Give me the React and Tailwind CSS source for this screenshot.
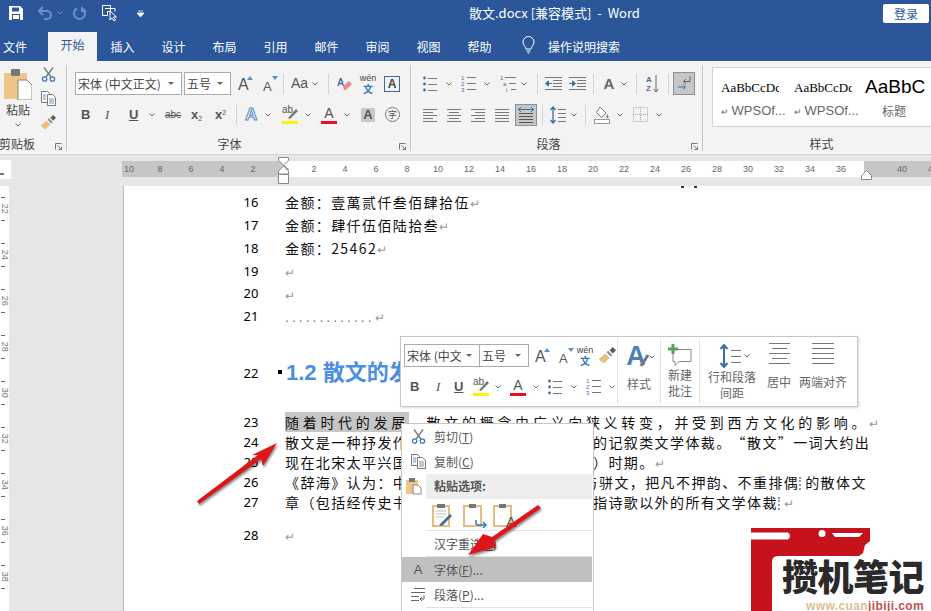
import React from "react";

const Chev = ({ cls = "", c = "#666" }) => (
  <svg width="6" height="4" viewBox="0 0 6 4" className={"shrink-0 " + cls}><path d="M.5.5 3 3 5.5.5" fill="none" stroke={c} /></svg>
);
const Sep = ({ cls = "" }) => <div className={"w-px h-[20px] bg-[#d4d4d4] shrink-0 " + cls} />;

const Launcher = () => (
  <svg width="7" height="7" viewBox="0 0 7 7" className="absolute right-[4px] bottom-[1px]"><path d="M.5 6.5V.5h6M2.5 2.5l4 4M6.5 3.5v3h-3" fill="none" stroke="#777" /></svg>
);

const Scissors = ({ s = 15 }) => (
  <svg width={s} height={s} viewBox="0 0 15 15" className="shrink-0"><path d="M3 .5 10 10M12 .5 5 10" stroke="#777" strokeWidth="1.3" fill="none" /><circle cx="3.6" cy="12" r="2.2" fill="none" stroke="#3f79b5" strokeWidth="1.3" /><circle cx="11.4" cy="12" r="2.2" fill="none" stroke="#3f79b5" strokeWidth="1.3" /></svg>
);
const CopyIco = () => (
  <svg width="15" height="15" viewBox="0 0 15 15" className="shrink-0"><path d="M.5.5h6l2 2v9h-8z" fill="#fff" stroke="#777" /><path d="M6.5 3.5h5l3 3v8h-8z" fill="#fff" stroke="#777" /><path d="M8 8h5M8 10h5M8 12h5M2 4h3M2 6h3M2 8h3" stroke="#6f93b8" /></svg>
);
const Brush = ({ s = 16 }) => (
  <svg width={s} height={s} viewBox="0 0 16 16" className="shrink-0"><path d="M0 11 6 6l4 4-5 5H3l1-2-2 1z" fill="#e6bd7c" /><path d="m7 5 1.500-1.500 4 4L11 9z" fill="#8a8a8a" /><path d="m10 3 3-3 3 3-3 3z" fill="#5b5b5b" /></svg>
);

const Lines = ({ w = 14, rows }) => (
  <svg width={w} height="14" viewBox={`0 0 ${w} 14`} className="shrink-0">
    {rows.map((r, i) => <path key={i} d={`M${r[0]} ${i * (12 / (rows.length - 1)) + 1}.5H${r[1]}`} stroke="#777" />)}
  </svg>
);
const AlignL = () => <Lines rows={[[0, 14], [0, 10], [0, 14], [0, 10], [0, 14]]} />;
const AlignC = () => <Lines rows={[[0, 14], [2, 12], [0, 14], [2, 12], [0, 14]]} />;
const AlignR = () => <Lines rows={[[0, 14], [4, 14], [0, 14], [4, 14], [0, 14]]} />;
const AlignJ = () => <Lines rows={[[0, 14], [0, 14], [0, 14], [0, 14], [0, 14]]} />;

const Bullets = ({ cls = "" }) => (
  <svg width="14" height="16" viewBox="0 0 14 16" className={"shrink-0 " + cls}>
    <circle cx="1.500" cy="2" r="1.400" fill="#3a6ea5" /><circle cx="1.500" cy="8" r="1.400" fill="#3a6ea5" /><circle cx="1.500" cy="14" r="1.400" fill="#3a6ea5" />
    <path d="M5 2.500h9M5 8.500h9M5 14.500h9" stroke="#777" />
  </svg>
);
const Numbers = ({ cls = "" }) => (
  <svg width="15" height="17" viewBox="0 0 15 17" className={"shrink-0 " + cls}>
    <text x="0" y="5" fontSize="6" fill="#3a6ea5" fontFamily="Liberation Sans">1</text>
    <text x="0" y="11" fontSize="6" fill="#3a6ea5" fontFamily="Liberation Sans">2</text>
    <text x="0" y="17" fontSize="6" fill="#3a6ea5" fontFamily="Liberation Sans">3</text>
    <path d="M6 2.500h9M6 8.500h9M6 14.500h9" stroke="#777" />
  </svg>
);
const Multi = () => (
  <svg width="17" height="17" viewBox="0 0 17 17" className="shrink-0">
    <text x="0" y="5" fontSize="6" fill="#3a6ea5" fontFamily="Liberation Sans">1</text>
    <text x="3" y="11" fontSize="6" fill="#3a6ea5" fontFamily="Liberation Sans">a</text>
    <text x="6" y="17" fontSize="6" fill="#3a6ea5" fontFamily="Liberation Sans">i</text>
    <path d="M5 2.500h11M9 8.500h7M11 14.500h5" stroke="#777" />
  </svg>
);
const Indent = ({ flip }) => (
  <svg width="17" height="14" viewBox="0 0 17 14" className="shrink-0">
    <path d="M0 .5h17M8 3.500h9M8 6.500h9M8 9.500h9M0 12.500h17" stroke="#777" />
    {flip ? <path d="M0 6.500h4M3.500 4l3 2.500-3 2.500z" stroke="#3a6ea5" fill="#3a6ea5" /> : <path d="M7 6.500H3M3.500 4 .5 6.500l3 2.500z" stroke="#3a6ea5" fill="#3a6ea5" />}
  </svg>
);
const Pilcrow = () => (
  <svg width="14" height="15" viewBox="0 0 14 15"><path d="M13 .5v5H7M9 3 6.500 5.500 9 8" fill="none" stroke="#666" /><path d="M1 11h7M6 8.500 8.500 11 6 13.500" fill="none" stroke="#3a6ea5" /></svg>
);
const LineSp = () => (
  <svg width="17" height="18" viewBox="0 0 17 18" className="shrink-0"><path d="M4 1v16M1.500 4 4 1l2.500 3M1.500 14 4 17l2.500-3" fill="none" stroke="#3a6ea5" strokeWidth="1.300" /><path d="M9 3.500h8M9 7.500h8M9 11.500h8M9 15.500h8" stroke="#777" /></svg>
);
const Shade = () => (
  <svg width="16" height="18" viewBox="0 0 16 18" className="shrink-0"><path d="m6 1 6 6-4.500 4.500-5-5z" fill="#fff" stroke="#777" /><path d="M13 8c1.500 2 2 3 1 4s-2 0-1-4" fill="#777" /><rect x=".5" y="13.500" width="15" height="4" fill="#fff" stroke="#999" /></svg>
);
const Borders = () => (
  <svg width="15" height="15" viewBox="0 0 15 15" className="shrink-0"><rect x=".5" y=".5" width="14" height="14" fill="none" stroke="#aaa" strokeDasharray="1 1" /><path d="M7.500 0v15M0 7.500h15" stroke="#aaa" strokeDasharray="1 1" /></svg>
);
const Eraser = ({}) => (
  <svg width="16" height="16" viewBox="0 0 16 16" className="shrink-0"><text x="0" y="10" fontSize="10" fill="#3a6ea5" fontFamily="Liberation Sans" fontWeight="700">A</text><path d="m6 10 6-5 3 3-6 6H7z" fill="#ec8a8f" /></svg>
);
const Wen = ({ cls = "" }) => (
  <div className={"shrink-0 flex flex-col items-center font-['Liberation_Sans',sans-serif] text-[9px] leading-[9px] text-[#444] " + cls}>
    <span>wén</span><span className="text-[10px] leading-[11px] text-[#2f79b9] font-bold font-['Noto_Sans_CJK_SC',sans-serif]">文</span>
  </div>
);
const Big = ({ t, up }) => (
  <div className="relative w-[14px] h-[20px] shrink-0 font-['Liberation_Sans',sans-serif] text-[#555] leading-none">
    <span className={up ? "absolute left-0 bottom-[1px] text-[16px]" : "absolute left-0 bottom-[1px] text-[13px]"}>{t}</span>
    <svg width="6" height="4" viewBox="0 0 6 4" className="absolute right-[-1px] top-[2px]">{up ? <path d="M3 0 6 4H0z" fill="#5f8fc0" /> : <path d="M3 4 6 0H0z" fill="#5f8fc0" />}</svg>
  </div>
);
const Hl = ({ cls = "" }) => (
  <div className={"relative w-[16px] h-[18px] shrink-0 " + cls}>
    <span className="absolute left-0 top-[-2px] text-[10px] leading-[12px] text-[#555] font-['Liberation_Sans',sans-serif]">ab</span>
    <svg width="16" height="13" viewBox="0 0 16 13" className="absolute left-0 top-[1px]"><path d="m6 11 8-9 2 2-8 8z" fill="#7a7a7a" /></svg>
    <div className="absolute left-0 right-0 bottom-0 h-[3px] bg-[#fff200]" />
  </div>
);
const RedA = ({ cls = "" }) => (
  <div className={"relative w-[16px] h-[18px] shrink-0 text-center font-['Liberation_Sans',sans-serif] text-[14px] leading-[15px] text-[#555] " + cls}>A<div className="absolute left-0 right-0 bottom-0 h-[3px] bg-[#e81123]" /></div>
);
const Select = ({ t, w, h = "h-[23px]" }) => (
  <div className={`flex items-center justify-between bg-white border border-[#ababab] px-[2px] text-[12px] text-[#444] overflow-hidden ${w} ${h}`}>
    <span className="whitespace-nowrap overflow-hidden">{t}</span>
    <svg width="6" height="3" viewBox="0 0 6 3" className="shrink-0 mx-[5px]"><path d="M0 0h6L3 3z" fill="#666" /></svg>
  </div>
);

const Tab = ({ t }) => <div className="w-[51px] text-center text-[12px] leading-[26px] text-white">{t}</div>;

const Group = ({ w, label, children, pr }) => (
  <div className={`relative flex flex-col h-[86px] shrink-0 border-r border-[#c6c6c6] ${w}`}>
    {children}
    <div className={`mt-auto mb-[-2px] h-[18px] text-center text-[12px] leading-[18px] text-[#444] ${pr}`}>{label}</div>
    <Launcher />
  </div>
);
const Row = ({ cls = "", children }) => <div className={"flex items-center h-[23px] " + cls}>{children}</div>;

const Rule = ({ n }) => <div className="w-[31px] shrink-0 text-center">{n}</div>;

const Ln = ({ n, h, cls = "", children }) => (
  <div className={`flex items-center ${h} ${cls}`}>
    <div className="w-[40px] ml-[107px] text-center text-[13px] text-black font-['Noto_Sans',sans-serif] shrink-0">{n}</div>
    <div className="ml-[14px] whitespace-nowrap text-[14px] text-[#111] tracking-[1.4px] leading-[19px] [text-spacing-trim:space-all]">{children}</div>
  </div>
);
const Pm = () => <span className="text-[#999] text-[12px]">↵</span>;
const Dotted = () => <span className="inline-block w-[5px] h-[13px] mr-[1px] align-[-2px] border-l-2 border-dotted border-[#999]" />;

const VCell = ({ n }) => (
  <div className="h-[46px] shrink-0 flex flex-col items-start">
    <div className="mt-[11px] w-[4px] h-px ml-[1px] bg-[#666]" />
    <div className="h-[22px] w-[8px] flex items-center justify-center"><span className="rotate-90 text-[9px] text-[#777] font-['Liberation_Sans',sans-serif]">{n}</span></div>
    <div className="w-[4px] h-px ml-[1px] bg-[#666]" />
  </div>
);

const MenuItem = ({ icon, t, u, rest = "", cls = "" }) => (
  <div className={`flex items-center h-[25px] shrink-0 text-[12px] text-[#555] ${cls}`}>
    <div className="w-[32px] flex justify-center shrink-0">{icon}</div>
    <span>{t}(<span className="underline">{u}</span>){rest}</span>
  </div>
);
const PasteSmall = ({ children }) => (
  <div className="relative w-[20px] h-[24px] shrink-0">
    <svg width="20" height="24" viewBox="0 0 20 24" className="absolute inset-0"><rect x="1" y="3" width="17" height="20" fill="#fff" stroke="#e3bd7f" strokeWidth="2" /><rect x="6" y="1" width="7" height="4" fill="#777" /></svg>
    {children}
  </div>
);
const StyleCell = ({ w }) => (
  <div className={`${w} pl-[8px] shrink-0`}>
    <div className="mt-[12px] text-[13px] leading-[16px] text-black whitespace-nowrap overflow-hidden w-[58px] font-['Liberation_Serif',serif]">AaBbCcDd</div>
    <div className="mt-[7px] text-[13px] leading-[16px] text-[#666] whitespace-nowrap font-['Liberation_Sans',sans-serif]"><span className="text-[9px]">↵ </span>WPSOf...</div>
  </div>
);

export default function App() {
  return (
    <div className="relative w-[931px] h-[611px] overflow-hidden flex flex-col bg-white font-['Noto_Sans_CJK_SC','Noto_Sans',sans-serif]">
      {/* Title bar */}
      <div className="flex items-center h-[32px] shrink-0 pb-[6px] bg-[#2b579a] text-white">
        <svg width="14" height="14" viewBox="0 0 14 14" className="ml-[9px] shrink-0"><path d="M0 0h11l3 3v11H0z" fill="#fff" /><rect x="3" y="1.500" width="7" height="4" fill="#2b579a" /><rect x="3" y="8" width="8" height="6" fill="#2b579a" /><rect x="4" y="9" width="6" height="4" fill="#fff" /></svg>
        <svg width="14" height="14" viewBox="0 0 14 14" className="ml-[15px] shrink-0"><path d="M1 5h8a4 4 0 0 1 0 8H6M5 1 1 5l4 4" fill="none" stroke="#6f8fc4" strokeWidth="2" /></svg>
        <Chev cls="ml-[5px]" c="#6f8fc4" />
        <svg width="14" height="14" viewBox="0 0 14 14" className="ml-[10px] shrink-0"><path d="M9 2.500a5.500 5.500 0 1 1-5 0M9 1v4h4" fill="none" stroke="#6f8fc4" strokeWidth="2" /></svg>
        <svg width="16" height="18" viewBox="0 0 16 18" className="ml-[15px] shrink-0"><path d="M.5 1.500h8v6h-3v4h-5zM3 4.500h10v3" fill="none" stroke="#fff" /><path d="m8 7 0 9 2-2 2 3 1.500-1-2-3h3z" fill="#2b579a" stroke="#fff" /></svg>
        <svg width="7" height="7" viewBox="0 0 7 7" className="ml-[19px] shrink-0"><path d="M1 1h5M0 3h7L3.500 7z" stroke="#fff" fill="#fff" strokeWidth=".8" /></svg>
        <div className="ml-[325px] text-[13px] whitespace-nowrap">散文.docx [兼容模式]&nbsp; -&nbsp; Word</div>
        <div className="ml-auto mr-[2px] w-[46px] h-[19px] rounded-[2px] bg-white text-center text-[12px] leading-[19px] text-[#2b579a]">登录</div>
      </div>
      {/* Tabs */}
      <div className="flex items-center h-[29px] shrink-0 bg-[#2b579a]">
        <div className="w-[48px] pl-[3px] text-[12px] leading-[26px] text-white">文件</div>
        <div className="w-[49px] h-[29px] bg-[#f3f3f3] text-center text-[12px] leading-[26px] text-[#2b579a]">开始</div>
        <div className="flex">
          <Tab t="插入" /><Tab t="设计" /><Tab t="布局" /><Tab t="引用" /><Tab t="邮件" /><Tab t="审阅" /><Tab t="视图" /><Tab t="帮助" />
        </div>
        <svg width="13" height="18" viewBox="0 0 13 18" className="ml-[17px] shrink-0 mb-[3px]"><path d="M4 13c0-2.500-3-3.500-3-7a5.500 5.500 0 0 1 11 0c0 3.500-3 4.500-3 7zM4.500 15h4M5.500 17h2" fill="none" stroke="#fff" /></svg>
        <div className="ml-[13px] text-[12px] leading-[26px] text-white">操作说明搜索</div>
      </div>
      {/* Ribbon */}
      <div className="flex h-[94px] shrink-0 py-[4px] bg-[#f3f3f3] border-b border-[#d4d4d4]">
        <Group w="w-[67px]" label={<span className="block text-left ml-[-1px]">剪贴板</span>}>
          <div className="flex">
            <div className="flex flex-col items-center w-[36px] shrink-0 pt-[4px]">
              <svg width="28" height="31" viewBox="0 0 28 31"><rect x="0" y="4" width="23" height="26" rx="1" fill="#edc687" /><rect x="7" y="0" width="9" height="7" rx="1" fill="#777" /><path d="M14 11h9l5 5v15H14z" fill="#fff" stroke="#888" /></svg>
              <div className="text-[12px] leading-[16px] text-[#444] mt-[2px]">粘贴</div>
              <Chev cls="mt-[5px]" />
            </div>
            <div className="flex flex-col items-center gap-[9px] w-[15px] ml-[5px] pt-[2px]">
              <Scissors /><CopyIco /><Brush s={15} />
            </div>
          </div>
        </Group>
        <Group w="w-[344px]" label="字体" pr="pr-[18px]">
          <div className="pt-[7px]">
            <Row cls="pl-[8px]">
              <Select t="宋体 (中文正文)" w="w-[107px]" />
              <Select t="五号" w="w-[47px] ml-[2px]" />
              <div className="ml-[7px]"><Big t="A" up /></div>
              <div className="ml-[11px]"><Big t="A" /></div>
              <Sep cls="ml-[6px]" />
              <span className="ml-[7px] w-[13px] text-[14px] text-[#555] font-['Liberation_Sans',sans-serif]">Aa</span>
              <Chev cls="ml-[8px]" />
              <Sep cls="ml-[10px]" />
              <div className="ml-[8px]"><Eraser /></div>
              <Wen cls="ml-[7px] w-[16px]" />
              <div className="ml-[8px] w-[16px] h-[16px] border border-[#3a6ea5] text-center text-[12px] leading-[14px] text-[#444] font-bold font-['Liberation_Sans',sans-serif]">A</div>
            </Row>
            <Row cls="mt-[8px] text-[#555] font-['Liberation_Sans',sans-serif] text-[13px]">
              <span className="ml-[14px] w-[9px] font-bold">B</span>
              <span className="ml-[15px] w-[8px] italic font-['Liberation_Serif',serif]">I</span>
              <span className="ml-[16px] w-[9px] underline font-bold">U</span>
              <Chev cls="ml-[11px]" />
              <span className="ml-[10px] w-[16px] text-[10px] line-through">abc</span>
              <span className="ml-[10px] w-[12px] font-bold">x<sub className="text-[7px] font-normal">2</sub></span>
              <span className="ml-[12px] w-[12px] font-bold">x<sup className="text-[7px] font-normal">2</sup></span>
              <Sep cls="ml-[9px]" />
              <span className="ml-[8px] w-[13px] text-[17px] font-bold text-[#e9f2fb] [-webkit-text-stroke:1px_#5b8fc7] leading-none">A</span>
              <Chev cls="ml-[7px]" />
              <Hl cls="ml-[11px]" />
              <Chev cls="ml-[7px]" />
              <RedA cls="ml-[10px]" />
              <Chev cls="ml-[7px]" />
              <span className="ml-[11px] w-[14px] h-[14px] bg-[#c8c8c8] text-center text-[13px] leading-[14px] font-bold">A</span>
              <span className="ml-[10px] w-[15px] h-[15px] rounded-full border border-[#777] text-center text-[9px] leading-[13px] font-['Noto_Sans_CJK_SC',sans-serif]">字</span>
            </Row>
          </div>
        </Group>
        <Group w="w-[292px]" label="段落" pr="pr-[16px]">
          <div className="pt-[7px]">
            <Row cls="pl-[12px]">
              <Bullets />
              <Chev cls="ml-[9px]" />
              <Numbers cls="ml-[9px]" />
              <Chev cls="ml-[8px]" />
              <div className="ml-[10px]"><Multi /></div>
              <Chev cls="ml-[4px]" />
              <Sep cls="ml-[10px]" />
              <div className="ml-[7px]"><Indent /></div>
              <div className="ml-[7px]"><Indent flip /></div>
              <Sep cls="ml-[7px]" />
              <span className="ml-[6px] w-[18px] text-center text-[15px] font-bold text-[#666] font-['Liberation_Sans',sans-serif] leading-none">A</span>
              <Chev cls="ml-[3px]" />
              <Sep cls="ml-[9px]" />
              <div className="ml-[9px] w-[15px] flex items-center shrink-0">
                <div className="flex flex-col text-[8px] leading-[9px] font-bold font-['Liberation_Sans',sans-serif]"><span className="text-[#3a6ea5]">A</span><span className="text-[#7a5ea8]">Z</span></div>
                <svg width="6" height="18" viewBox="0 0 6 18" className="ml-[1px]"><path d="M3 0v17M.5 14 3 17l2.500-3" fill="none" stroke="#666" /></svg>
              </div>
              <Sep cls="ml-[7px]" />
              <div className="ml-[4px] w-[22px] h-[23px] bg-[#c6c6c6] border border-[#8f8f8f] flex items-center justify-center"><Pilcrow /></div>
            </Row>
            <Row cls="mt-[8px] pl-[12px]">
              <AlignL />
              <div className="ml-[10px]"><AlignC /></div>
              <div className="ml-[10px]"><AlignR /></div>
              <div className="ml-[10px]"><AlignJ /></div>
              <div className="ml-[6px] w-[22px] h-[22px] bg-[#c6c6c6] border border-[#8f8f8f] flex flex-col items-center justify-center gap-[1px]">
                <svg width="16" height="5" viewBox="0 0 16 5"><path d="M0 2.500h16M3 0 .5 2.500 3 5M13 0l2.500 2.500L13 5" fill="none" stroke="#3a6ea5" /></svg>
                <svg width="14" height="10" viewBox="0 0 14 10"><path d="M0 .5h14M0 3.500h14M0 6.500h14M0 9.500h14" stroke="#555" /></svg>
              </div>
              <Sep cls="ml-[5px]" />
              <div className="ml-[6px]"><LineSp /></div>
              <Chev cls="ml-[5px]" />
              <Sep cls="ml-[8px]" />
              <div className="ml-[8px]"><Shade /></div>
              <Chev cls="ml-[7px]" />
              <div className="ml-[10px]"><Borders /></div>
              <Chev cls="ml-[8px]" />
            </Row>
          </div>
        </Group>
        <div className="relative flex flex-col h-[86px] flex-1 min-w-0 pl-[9px]">
          <div className="flex h-[60px] mt-[2px] bg-white border border-[#d4d4d4] border-r-0 shrink-0">
            <StyleCell w="w-[73px]" />
            <StyleCell w="w-[72px]" />
            <div className="flex-1 pl-[7px]">
              <div className="mt-[7px] text-[19px] leading-[24px] text-black whitespace-nowrap font-['Liberation_Sans',sans-serif]">AaBbC</div>
              <div className="mt-[4px] text-[12px] leading-[16px] text-[#666] ml-[17px]">标题</div>
            </div>
          </div>
          <div className="mt-auto mb-[-2px] h-[18px] text-center text-[12px] leading-[18px] text-[#444]">样式</div>
        </div>
      </div>
      {/* Ruler */}
      <div className="relative flex items-start h-[31px] shrink-0 bg-[#e6e6e6] pt-[5px]">
        <div className="w-[11px] h-[19px] bg-white flex items-center shrink-0"><div className="w-[4px] h-[2px] bg-[#777] mt-[8px]" /></div>
        <div className="ml-[111px] mt-[1px] flex h-[16px] flex-1 text-[9px] leading-[16px] text-[#666] font-['Liberation_Sans',sans-serif] min-w-0">
          <div className="w-[161px] shrink-0 flex justify-end pr-[14.500px] bg-[#c6c6c6]">
            {[10, 8, 6, 4, 2].map((n) => <Rule key={n} n={n} />)}
          </div>
          <div className="w-[581px] shrink-0 flex pl-[15.500px] bg-white">
            {[2, 4, 6, 8, 10, 12, 14, 16, 18, 20, 22, 24, 26, 28, 30, 32, 34, 36, 38].map((n) => <Rule key={n} n={n} />)}
          </div>
          <div className="flex-1 flex pl-[22.500px] bg-[#c6c6c6] min-w-0">
            {[40, 42].map((n) => <Rule key={n} n={n} />)}
          </div>
        </div>
        <svg width="12" height="28" viewBox="0 0 12 28" className="absolute left-[278px] top-[2px]"><path d="M.5.500h10v3L5.500 8l5 5v0L5.500 8 .5 3.500zM5.500 9l5 5v3H.5v-3zM.5 17.500h10v9H.5z" fill="#fff" stroke="#888" /></svg>
        <svg width="11" height="10" viewBox="0 0 11 10" className="absolute left-[861px] top-[15px]"><path d="M5.500.5l5 5v4H.5v-4z" fill="#fff" stroke="#888" /></svg>
      </div>
      {/* Document area */}
      <div className="flex flex-1 min-h-0">
        <div className="w-[9px] shrink-0 bg-white flex flex-col overflow-hidden">
          {[22, 24, 26, 28, 30, 32, 34, 36, 38].map((n) => <VCell key={n} n={n} />)}
        </div>
        <div className="w-[114px] shrink-0 bg-[#e6e6e6]" />
        <div className="flex-1 min-w-0 bg-white border-l border-[#b8b8b8] pt-[5.600px] relative">
          <div className="absolute left-[557px] top-0 flex gap-[10px]"><div className="w-[3px] h-[2px] bg-[#333]" /><div className="w-[3px] h-[2px] bg-[#333]" /></div>
          <Ln n="16" h="h-[22.800px]">金额：壹萬贰仟叁佰肆拾伍<Pm /></Ln>
          <Ln n="17" h="h-[22.800px]">金额：肆仟伍佰陆拾叁<Pm /></Ln>
          <Ln n="18" h="h-[22.800px]">金额：25462<Pm /></Ln>
          <Ln n="19" h="h-[22.800px]"><Pm /></Ln>
          <Ln n="20" h="h-[22.800px]"><Pm /></Ln>
          <Ln n="21" h="h-[22.800px]"><span className="text-[#777] tracking-[3px] font-['Liberation_Sans',sans-serif]">.............</span><Pm /></Ln>
          <Ln n="22" h="h-[84.600px]" cls="pt-[6px]">
            <span className="inline-block w-[4px] h-[4px] bg-black ml-[-7px] mr-[4px] align-[6px]" />
            <span className="text-[22px] font-bold text-[#4a8fe3] tracking-normal font-['Liberation_Sans','Noto_Sans_CJK_SC',sans-serif]">1.2 散文的发展</span>
          </Ln>
          <Ln n="23" h="h-[20px]"><span className="tracking-[3.700px]"><span className="bg-[#c6c6c6]">随着时代的发展</span>，散文的概念由广义向狭义转变，并受到西方文化的影响。</span><Pm /></Ln>
          <Ln n="24" h="h-[20px]">散文是一种抒发作者真情实感、写作方式灵活的记叙类文学体裁。“散文”一词大约出</Ln>
          <Ln n="25" h="h-[20px]">现在北宋太平兴国年间成书的《太平御览》（）时期。<Pm /></Ln>
          <Ln n="26" h="h-[20px]">《辞海》认为：中国古代称不押韵之文体皆<span className="ml-[6px]">与骈文，把凡不押韵、不重排偶</span><Dotted />的散体文</Ln>
          <Ln n="27" h="h-[20px]">章（包括经传史书在内）。现代的散文则是泛指诗歌以外的所有文学体裁<Dotted /><Pm /></Ln>
          <Ln n="28" h="h-[46px]"><Pm /></Ln>
        </div>
      </div>

      {/* Floating mini toolbar */}
      <div className="absolute left-[400px] top-[336px] w-[458px] h-[71px] bg-white border border-[#c6c6c6] shadow-[1px_1px_2px_rgba(0,0,0,0.15)] flex text-[12px] text-[#666]">
        <div className="w-[217px] shrink-0 border-r border-[#e2e2e2] my-[2px]">
          <div className="flex items-center mt-[5px] pl-[3px]">
            <Select t="宋体 (中文" w="w-[76px]" />
            <Select t="五号" w="w-[50px] ml-[-1px]" />
            <div className="ml-[6px]"><Big t="A" up /></div>
            <div className="ml-[10px]"><Big t="A" /></div>
            <Wen cls="ml-[4px] w-[16px]" />
            <div className="ml-[6px]"><Brush s={17} /></div>
          </div>
          <div className="flex items-center mt-[10px] text-[13px] text-[#555] font-['Liberation_Sans',sans-serif] h-[19px]">
            <span className="ml-[9px] w-[9px] font-bold">B</span>
            <span className="ml-[17px] w-[6px] italic font-['Liberation_Serif',serif]">I</span>
            <span className="ml-[12px] w-[9px] underline font-bold">U</span>
            <Hl cls="ml-[10px]" />
            <Chev cls="ml-[6px]" />
            <RedA cls="ml-[9px]" />
            <Chev cls="ml-[7px]" />
            <Bullets cls="ml-[9px]" />
            <Chev cls="ml-[9px]" />
            <Numbers cls="ml-[9px]" />
            <Chev cls="ml-[8px]" />
          </div>
        </div>
        <div className="w-[43px] shrink-0 border-r border-[#e2e2e2] my-[2px] flex flex-col items-center">
          <div className="flex items-start mt-[5px] ml-[3px] h-[25px]">
            <span className="text-[27px] leading-[25px] font-bold text-[#4d7fb8] font-['Liberation_Sans',sans-serif]">A</span>
            <svg width="10" height="14" viewBox="0 0 10 14" className="ml-[-7px] mt-[9px]"><path d="M2 13 9 2" stroke="#777" strokeWidth="3" /></svg>
            <Chev cls="mt-[11px]" />
          </div>
          <div className="mt-[7px] leading-[16px]">样式</div>
        </div>
        <div className="w-[39px] shrink-0 border-r border-[#e2e2e2] my-[2px] flex flex-col items-center">
          <svg width="24" height="22" viewBox="0 0 24 22" className="mt-[5px]"><path d="M5 5.500h18v12H11l-4 4v-4H5z" fill="#fff" stroke="#888" /><path d="M5 0v10M0 5h10" stroke="#5fa05f" strokeWidth="3" /></svg>
          <div className="mt-[1px] leading-[16px]">新建</div>
          <div className="leading-[16px]">批注</div>
        </div>
        <div className="flex-1 my-[2px] relative flex">
          <div className="w-[64px] shrink-0 flex flex-col items-center">
            <div className="flex items-center mt-[4px] h-[25px] ml-[4px]">
              <svg width="22" height="24" viewBox="0 0 22 24"><path d="M5 1v22M1.500 5 5 1l3.500 4M1.500 19 5 23l3.500-4" fill="none" stroke="#3a6ea5" strokeWidth="2" /><path d="M12 6.500h10M12 12.500h10M12 18.500h10" stroke="#777" /></svg>
              <Chev cls="ml-[3px]" />
            </div>
            <div className="mt-[1px] leading-[16px] whitespace-nowrap">行和段落</div>
            <div className="leading-[16px]">间距</div>
          </div>
          <div className="w-[30px] shrink-0 flex flex-col items-center">
            <svg width="21" height="22" viewBox="0 0 21 22" className="mt-[4px] shrink-0"><path d="M0 .5h21M3 5.500h15M0 10.500h21M3 15.500h15M0 20.500h21" stroke="#777" /></svg>
            <div className="mt-[9px] leading-[16px] whitespace-nowrap">居中</div>
          </div>
          <div className="w-[48px] shrink-0 ml-[5px] flex flex-col items-center">
            <svg width="22" height="22" viewBox="0 0 22 22" className="mt-[4px]"><path d="M0 .5h22M0 5.500h22M0 10.500h22M0 15.500h22M0 20.500h22" stroke="#777" /></svg>
            <div className="mt-[9px] leading-[16px] whitespace-nowrap">两端对齐</div>
          </div>
        </div>
      </div>

      {/* Context menu */}
      <div className="absolute left-[401px] top-[423px] w-[193px] h-[188px] bg-white border border-[#c6c6c6] border-b-0 flex flex-col overflow-hidden">
        <MenuItem icon={<Scissors />} t="剪切" u="T" />
        <MenuItem icon={<CopyIco />} t="复制" u="C" />
        <div className="flex items-center h-[25px] shrink-0">
          <div className="w-[24px] flex justify-center shrink-0">
            <svg width="16" height="17" viewBox="0 0 16 17"><rect x="0" y="2" width="12" height="14" fill="#edc687" /><rect x="3" y="0" width="6" height="4" fill="#777" /><path d="M7 7h5l3 3v6H7z" fill="#fff" stroke="#888" /></svg>
          </div>
          <div className="flex-1 h-full mr-[1px] bg-[#eeeeee] pl-[8px] text-[12px] font-bold leading-[24px] text-[#555]">粘贴选项:</div>
        </div>
        <div className="flex items-center h-[32px] shrink-0 gap-[10px] border-b border-[#e2e2e2] ml-[24px] pl-[6px] mr-[1px]">
          <div className="relative w-[21px] h-[24px] shrink-0">
            <svg width="21" height="24" viewBox="0 0 21 24"><rect x="1" y="3" width="16" height="20" fill="#fff" stroke="#e3bd7f" strokeWidth="2" /><rect x="5" y="1" width="8" height="4" fill="#777" /><path d="M4 8h10M4 11h10M4 14h8" stroke="#bbb" /><path d="m7 22 11-11 2 2-10 10z" fill="#3a6ea5" /></svg>
          </div>
          <PasteSmall><svg width="12" height="9" viewBox="0 0 12 9" className="absolute right-[-4px] bottom-[-1px]"><path d="M1 1v3a2 2 0 0 0 2 2h8M8 3l3 3-3 3" fill="none" stroke="#2f79b9" strokeWidth="1.500" /></svg></PasteSmall>
          <PasteSmall><span className="absolute right-[-3px] bottom-[-3px] text-[15px] leading-[16px] text-[#555] font-['Liberation_Sans',sans-serif]">A</span></PasteSmall>
        </div>
        <div className="flex items-center h-[25px] shrink-0 pl-[32px] text-[12px] text-[#555]"><span>汉字重选(<span className="underline">V</span>)</span></div>
        <div className="ml-[24px] mr-[1px] h-px bg-[#e2e2e2] shrink-0" />
        <MenuItem icon={<span className="text-[13px] font-['Liberation_Sans',sans-serif]">A</span>} t="字体" u="F" rest="..." cls="bg-[#c0c0c0] mr-[1px]" />
        <MenuItem icon={<svg width="14" height="13" viewBox="0 0 14 13"><path d="M3 .5h11M0 4.500h14M0 8.500h8M0 12.500h8M13 7v4H9M11 9l-2 2 2 2" fill="none" stroke="#666" /></svg>} t="段落" u="P" rest="..." />
        <div className="ml-[24px] mr-[1px] h-px bg-[#e2e2e2] shrink-0" />
      </div>

      {/* Annotation arrows */}
      <svg width="931" height="611" viewBox="0 0 931 611" className="absolute left-0 top-0 pointer-events-none drop-shadow-[1px_2px_1px_rgba(0,0,0,0.45)]">
        <path d="M197 501 258 455 252 455 277 443 263 466 261 459 199 504z" fill="#e0151b" />
        <path d="M538 505 492 537 483 534 468 555 496 547 494 541 541 508z" fill="#e0151b" />
      </svg>

      {/* Watermark logo */}
      <div className="absolute left-[751px] top-[528px] w-[180px] h-[83px] overflow-hidden">
        <svg width="180" height="83" viewBox="0 0 180 83" className="absolute inset-0">
          <path d="M0 0h119v13l-5 4-2 8-4 3H27q-6 0-6 6v49H0z" fill="#c6131b" />
          <path d="M0 4.500h37q4 3.500 0 7H0z" fill="#fff" />
          <circle cx="71" cy="5.500" r="3.500" fill="#fff" />
          <path d="M81 5h31l-4 4H84z" fill="#fff" />
        </svg>
        <div className="absolute left-[31px] top-[27px] w-[149px] text-[36px] leading-[40px] font-black text-[#2a2a2a] whitespace-nowrap tracking-[-0.5px]">攒机笔记</div>
        <div className="absolute left-[55px] top-[71px] text-[12px] leading-[14px] font-bold tracking-[0.4px] whitespace-nowrap font-['Liberation_Sans',sans-serif]"><span className="text-[#dcbf94]">www.cuan</span><span className="text-[#c8504f]">jibiji.com</span></div>
      </div>
    </div>
  );
}
